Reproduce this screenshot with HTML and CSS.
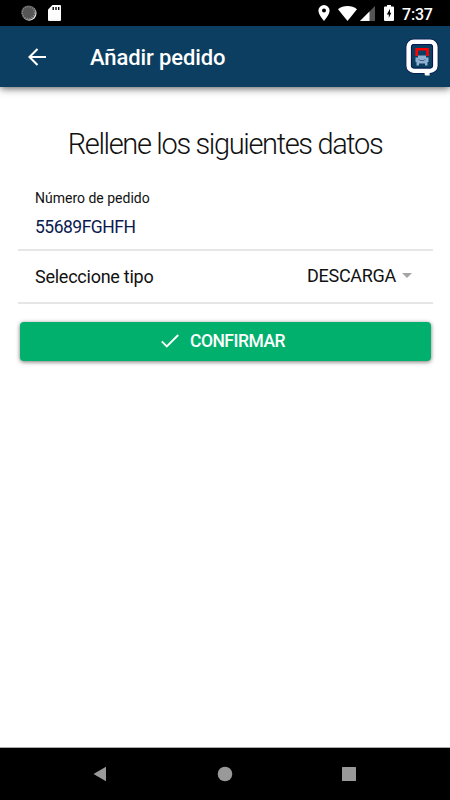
FILE: index.html
```html
<!DOCTYPE html>
<html lang="es">
<head>
    <meta charset="UTF-8">
    <meta name="viewport" content="width=device-width, initial-scale=1.0">
    <title>Añadir pedido</title>
    <link rel="stylesheet" href="styles.css">
</head>
<body>
    <div class="status-bar">
        <div class="status-left">
            <svg width="17" height="17" viewBox="0 0 17 17">
                <circle cx="8.2" cy="8.4" r="7.3" fill="#e8e8e8"/>
                <circle cx="7.4" cy="7.6" r="7.2" fill="#555"/>
                <circle cx="7.4" cy="7.6" r="6" fill="none" stroke="#8a8a8a" stroke-width="1.3" stroke-dasharray="1.2 1.2"/>
            </svg>
            <svg width="13" height="16" viewBox="0 0 13 16">
                <path d="M4.5 0H12a1 1 0 0 1 1 1v14a1 1 0 0 1-1 1H1a1 1 0 0 1-1-1V4.5z" fill="#fff"/>
                <path d="M5.2 2v3M8 2v3M10.7 2v3" stroke="#000" stroke-width="1.4"/>
            </svg>
        </div>
        <div class="status-right">
            <svg class="icon-pin" width="12" height="16" viewBox="0 0 12 16">
                <path d="M6 0a5.6 5.6 0 0 0-5.6 5.6C.4 9.8 6 16 6 16s5.600-6.200 5.600-10.400A5.600 5.600 0 0 0 6 0zm0 7.600a2 2 0 1 1 0-4 2 2 0 0 1 0 4z" fill="#fff"/>
            </svg>
            <svg class="icon-wifi" width="19" height="15" viewBox="0 0 19 15">
                <path d="M9.500 15L0 3.200C2.600 1.100 5.900 0 9.500 0S16.400 1.100 19 3.200z" fill="#fff"/>
            </svg>
            <svg class="icon-signal" width="15" height="15" viewBox="0 0 15 15">
                <path d="M15 0v15H0z" fill="#555"/>
                <path d="M9.500 5.500V15H0z" fill="#fff"/>
            </svg>
            <svg class="icon-battery" width="10" height="16" viewBox="0 0 10 16">
                <path d="M3 0h4v1.600h2a1 1 0 0 1 1 1V15a1 1 0 0 1-1 1H1a1 1 0 0 1-1-1V2.600a1 1 0 0 1 1-1h2z" fill="#fff"/>
                <path d="M6 3.800L2.800 9.400h2V13L7.300 7.700H6z" fill="#000"/>
            </svg>
            <span class="clock">7:37</span>
        </div>
    </div>

    <header class="toolbar">
        <svg class="back" width="18" height="18" viewBox="0 0 18 18">
            <path d="M18 9H1.600M9.500 1L1.500 9l8 8" fill="none" stroke="#fff" stroke-width="2.100"/>
        </svg>
        <h1>Añadir pedido</h1>
        <svg class="logo" width="34" height="40" viewBox="0 0 34 40">
            <rect x="3.700" y="4.800" width="26.600" height="28.900" rx="5" fill="none" stroke="#07164f" stroke-width="6"/>
            <path d="M19.600 34h5v4.500h-3.500a1.500 1.500 0 0 1-1.500-1.500z" fill="#fff"/>
            <rect x="3.700" y="4.800" width="26.600" height="28.900" rx="5" fill="#0b3e60" stroke="#fff" stroke-width="4.600"/>
            <rect x="6.400" y="7.500" width="21.200" height="23.500" rx="2.500" fill="none" stroke="#07164f"/>
            <path d="M11.700 19v-6.800h10.800V19" fill="none" stroke="#f00" stroke-width="2.600"/>
            <path d="M13 18.500h8v2h2.500v4.500h-1v3.500H20v-2h-6v2h-2.500V25h-1v-4.500H13z" fill="#8fb0d0"/>
            <path d="M13.500 22l1.500 1.500h4l1.500-1.500" fill="none" stroke="#3c6384"/>
        </svg>
    </header>

    <main class="content">
        <h2>Rellene los siguientes datos</h2>

        <div class="form">
            <div class="field">
                <label>Número de pedido</label>
                <div class="value">55689FGHFH</div>
            </div>
            <div class="field-select">
                <span class="select-label">Seleccione tipo</span>
                <span class="select-value">DESCARGA</span>
                <span class="arrow"></span>
            </div>
        </div>

        <button class="confirm">
            <svg width="18" height="14" viewBox="0 0 18 14">
                <path d="M.8 7.300l5 5L17.200 1" fill="none" stroke="#fff" stroke-width="1.900"/>
            </svg>
            <span>CONFIRMAR</span>
        </button>
    </main>

    <nav class="nav-bar">
        <svg width="14" height="16" viewBox="0 0 14 16"><path d="M13 .8v14.400L.5 8z" fill="#999"/></svg>
        <svg width="16" height="16" viewBox="0 0 16 16"><circle cx="8" cy="8" r="7.300" fill="#999"/></svg>
        <svg width="14" height="14" viewBox="0 0 14 14"><rect width="14" height="14" rx=".5" fill="#999"/></svg>
    </nav>
</body>
</html>
```

FILE: styles.css
```css
* {
    margin: 0;
    padding: 0;
    box-sizing: border-box;
    font-family: Roboto, "Noto Sans", sans-serif;
}

body {
    height: 100vh;
    display: flex;
    flex-direction: column;
    background: #fff;
    color: #111;
    overflow: hidden;
}

svg {
    display: block;
    flex-shrink: 0;
}

.status-bar {
    height: 26px;
    padding: 0 18px 0 21px;
    display: flex;
    justify-content: space-between;
    align-items: center;
    background: #000;
    color: #fff;
}

.status-left,
.status-right {
    display: flex;
    align-items: center;
}

.status-left {
    gap: 10px;
}

.icon-wifi {
    margin-left: 8px;
}

.icon-signal {
    margin-left: 3px;
}

.icon-battery {
    margin-left: 9px;
}

.clock {
    width: 30px;
    margin-left: 8px;
    padding-top: 2px;
    font-size: 16px;
    font-weight: 500;
    letter-spacing: -0.2px;
    white-space: nowrap;
}

.toolbar {
    height: 61px;
    padding: 0 11px 0 28px;
    display: flex;
    align-items: center;
    background: #0b3e60;
    color: #fff;
    box-shadow: 0 1px 8px rgba(0, 0, 0, 0.7);
}

.toolbar h1 {
    margin-left: 44px;
    padding-top: 1px;
    font-size: 22px;
    font-weight: 500;
    letter-spacing: -0.1px;
}

.logo {
    margin-left: auto;
}

.content {
    flex: 1;
    padding: 39px 18px 0;
}

.content h2 {
    height: 36px;
    line-height: 36px;
    font-size: 29px;
    font-weight: 300;
    letter-spacing: -1.35px;
    text-align: center;
    white-space: nowrap;
}

.form {
    margin-right: -1px;
}

.field {
    height: 89px;
    padding: 27px 17px 0;
    border-bottom: 2px solid #e6e6e6;
}

.field label {
    display: block;
    font-size: 14px;
    line-height: 18px;
}

.value {
    margin-top: 8px;
    font-size: 17.5px;
    line-height: 24px;
    letter-spacing: -0.5px;
    color: #0a1a50;
}

.field-select {
    height: 53px;
    padding: 0 21px 2px 17px;
    display: flex;
    align-items: center;
    border-bottom: 2px solid #e6e6e6;
    font-size: 18px;
}

.select-label {
    padding-top: 2px;
    letter-spacing: -0.25px;
}

.select-value {
    margin-left: auto;
    letter-spacing: -0.3px;
}

.arrow {
    margin-left: 6px;
    border: 5.5px solid transparent;
    border-top-color: #a5a5a5;
    border-bottom: none;
}

.confirm {
    width: 411px;
    height: 39px;
    margin: 18px 0 0 2px;
    padding: 0 5px 1px 0;
    display: flex;
    justify-content: center;
    align-items: center;
    gap: 11px;
    border: none;
    border-radius: 4px;
    background: #00b06c;
    color: #fff;
    font-size: 17.5px;
    font-weight: 500;
    letter-spacing: -0.5px;
    box-shadow: 0 1px 4px rgba(0, 0, 0, 0.55);
}

.nav-bar {
    height: 53px;
    padding: 0 94px 0 93px;
    display: flex;
    justify-content: space-between;
    align-items: center;
    border-top: 1px solid #aaa;
    background: #000;
}
```
